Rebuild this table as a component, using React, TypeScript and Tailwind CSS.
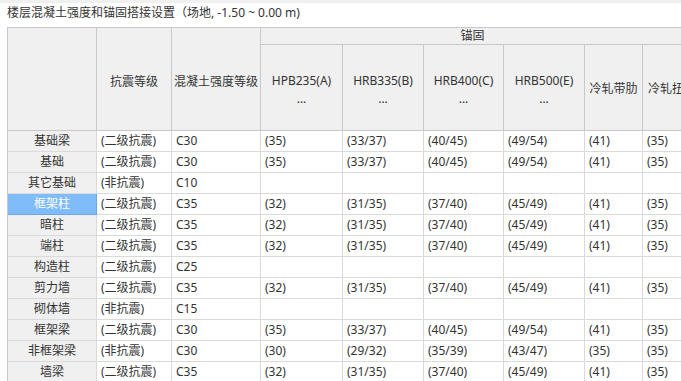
import React from 'react';

type Row = {
  name: string;
  level: string;
  grade: string;
  values: string[];
  active?: boolean;
};

const FULL_A = ['(35)', '(33/37)', '(40/45)', '(49/54)', '(41)', '(35)'];
const FULL_B = ['(32)', '(31/35)', '(37/40)', '(45/49)', '(41)', '(35)'];
const EMPTY = ['', '', '', '', '', ''];

const rows: Row[] = [
  { name: '基础梁', level: '(二级抗震)', grade: 'C30', values: FULL_A },
  { name: '基础', level: '(二级抗震)', grade: 'C30', values: FULL_A },
  { name: '其它基础', level: '(非抗震)', grade: 'C10', values: EMPTY },
  { name: '框架柱', level: '(二级抗震)', grade: 'C35', values: FULL_B, active: true },
  { name: '暗柱', level: '(二级抗震)', grade: 'C35', values: FULL_B },
  { name: '端柱', level: '(二级抗震)', grade: 'C35', values: FULL_B },
  { name: '构造柱', level: '(二级抗震)', grade: 'C25', values: EMPTY },
  { name: '剪力墙', level: '(二级抗震)', grade: 'C35', values: FULL_B },
  { name: '砌体墙', level: '(非抗震)', grade: 'C15', values: EMPTY },
  { name: '框架梁', level: '(二级抗震)', grade: 'C30', values: FULL_A },
  { name: '非框架梁', level: '(非抗震)', grade: 'C30', values: ['(30)', '(29/32)', '(35/39)', '(43/47)', '(35)', '(35)'] },
  { name: '墙梁', level: '(二级抗震)', grade: 'C35', values: FULL_B },
];

const steelHeaders = ['HPB235(A)', 'HRB335(B)', 'HRB400(C)', 'HRB500(E)'];

const headCell = 'bg-[#f0f0f0] border-r border-b border-[#c8c8c8] flex items-center justify-center text-center whitespace-nowrap overflow-hidden';
const bodyCell = 'border-r border-b border-[#dadada] flex items-center px-[4px] whitespace-nowrap overflow-hidden';

export default function App() {
  return (
    <div
      className="w-[681px] h-[381px] overflow-hidden bg-white text-[12px] text-[#333333]"
      style={{ fontFamily: '"Noto Sans", "Noto Sans CJK SC", sans-serif' }}
    >
      <div className="h-[3px] bg-[#f0f0f0]" />
      <div className="h-[24px] px-[7px] leading-[18px] pt-[1px] whitespace-nowrap">
        楼层混凝土强度和锚固搭接设置（场地, -1.50 ~ 0.00 m)
      </div>

      <div className="ml-[7px] w-[697px] grid grid-cols-[89px_75px_89px_82px_81px_80px_81px_58px_60px] grid-rows-[17px_86px] auto-rows-[21px] border-l border-t border-[#c8c8c8]">
        {/* header */}
        <div className={`${headCell} row-span-2`} />
        <div className={`${headCell} row-span-2 pt-[6px]`}>抗震等级</div>
        <div className={`${headCell} row-span-2 pt-[6px]`}>混凝土强度等级</div>
        <div className={`${headCell} col-span-6 pr-[18px]`}>锚固</div>

        {steelHeaders.map((h) => (
          <div key={h} className={`${headCell} flex-col leading-[18px] pt-[5px]`}>
            <span>{h}</span>
            <span>...</span>
          </div>
        ))}
        <div className={`${headCell} pt-[2px]`}>冷轧带肋</div>
        <div className={`${headCell} justify-start pl-[5px] pt-[2px]`}>冷轧扭筋</div>

        {/* body */}
        {rows.map((r) => (
          <React.Fragment key={r.name}>
            {r.active ? (
              <div className="bg-[#80bcf9] border-r border-b border-[#6aa8ee] text-white flex items-center justify-center">
                {r.name}
              </div>
            ) : (
              <div className="bg-[#f0f0f0] border-r border-b border-[#dadada] flex items-center justify-center">
                {r.name}
              </div>
            )}
            <div className={bodyCell}>{r.level}</div>
            <div className={bodyCell}>{r.grade}</div>
            {r.values.map((v, i) => (
              <div key={i} className={bodyCell}>
                {v}
              </div>
            ))}
          </React.Fragment>
        ))}
      </div>
    </div>
  );
}
